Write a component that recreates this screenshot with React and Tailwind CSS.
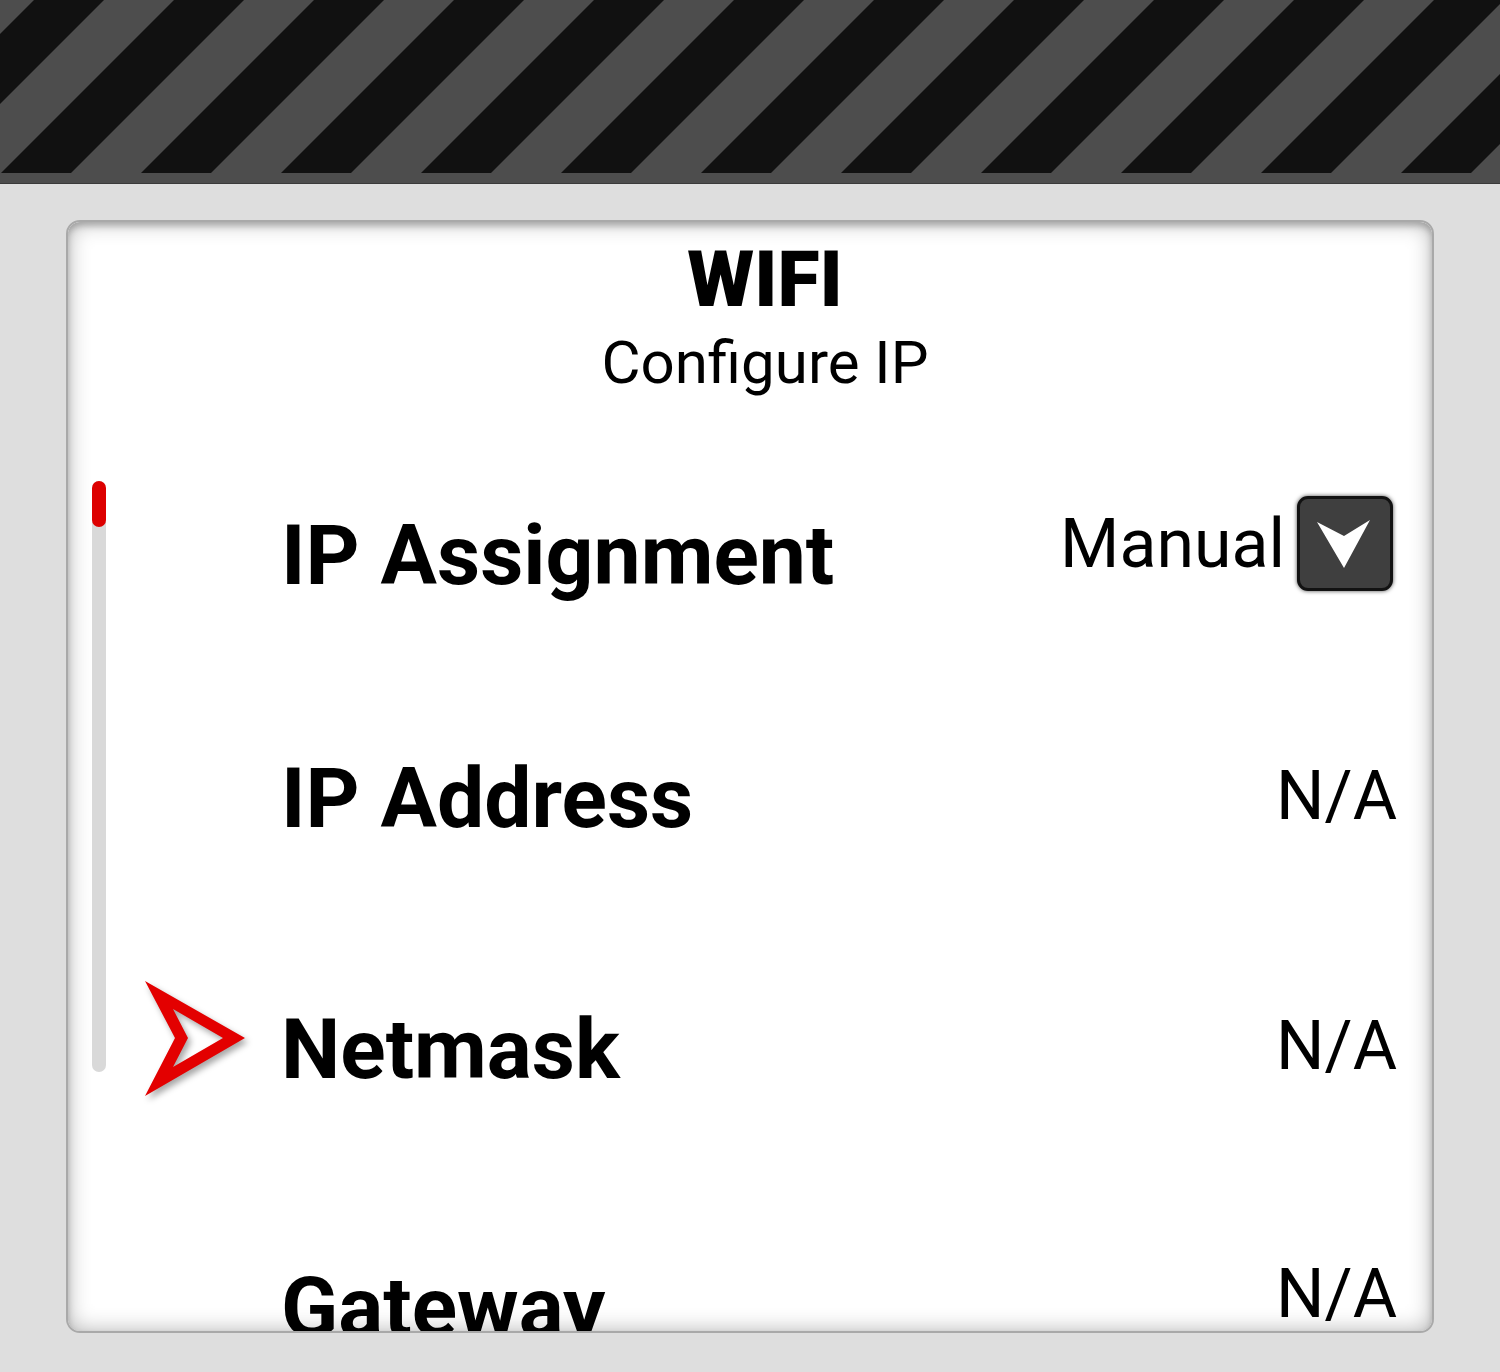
import React from "react";

const rows = [
  { label: "IP Assignment", value: "Manual", dropdown: true, labelTop: "mt-[20px]", valueTop: "mt-[16px]" },
  { label: "IP Address", value: "N/A", labelTop: "mt-[13px]", valueTop: "mt-[18px]" },
  { label: "Netmask", value: "N/A", selected: true, labelTop: "mt-[14px]", valueTop: "mt-[18px]" },
  { label: "Gateway", value: "N/A", labelTop: "mt-[22px]", valueTop: "mt-[16px]" },
];

const Stripes = () => {
  const bands = [];
  for (let k = -2; k < 12; k++) {
    const x = 140 * k;
    bands.push(
      <polygon key={k} points={`${x},174 ${x + 70},174 ${x + 244},0 ${x + 174},0`} fill="#111111" />
    );
  }
  return (
    <svg width="1500" height="173" viewBox="0 0 1500 173" className="block">
      {bands}
    </svg>
  );
};

const DropdownButton = () => (
  <div className="mt-[2px] mr-[4px] w-[96px] h-[95px] rounded-[11px] border-[3px] border-[#121212] bg-[#3f3f3f] shadow-[0_0_4px_rgba(0,0,0,0.7)] flex items-center justify-center">
    <svg width="90" height="89" viewBox="0 0 90 89">
      <polygon points="17,23 44,37 70,21 44,69" fill="#ffffff" />
    </svg>
  </div>
);

const Pointer = () => (
  <svg width="120" height="130" viewBox="140 975 120 130" className="-mt-[20px] ml-[34px] drop-shadow-[3px_4px_3px_rgba(0,0,0,0.35)]">
    <path
      fillRule="evenodd"
      fill="#e30000"
      d="M145 982 L245 1039 L145 1097 L175 1039 Z M173 1010 L188 1039 L173 1068 L223 1039 Z"
    />
  </svg>
);

const Row = ({ row }) => (
  <div className="h-[250px] flex items-start">
    <div className="w-[175px] shrink-0 flex">
      {row.selected && <Pointer />}
    </div>
    <div className={`${row.labelTop} flex-1 text-[84px] leading-none font-bold text-black`}>{row.label}</div>
    <div className="flex items-start gap-[12px]">
      <div className={`${row.valueTop} text-[68px] leading-none text-black`}>{row.value}</div>
      {row.dropdown && <DropdownButton />}
    </div>
  </div>
);

export default function App() {
  return (
    <div className="w-[1500px] h-[1372px] bg-[#dedede] font-['Roboto',sans-serif] overflow-hidden">
      <header className="h-[184px] bg-[#4d4d4d] border-b border-[#3a3a3a]">
        <Stripes />
      </header>

      <main className="mt-[36px] mx-[66px]">
        <section className="relative h-[1113px] rounded-[14px] border-2 border-[#a9a9a9] bg-white overflow-hidden">
          <div className="pt-[20px] pl-[30px] flex flex-col items-center">
            <h1 className="text-[77px] leading-none font-black text-black">WIFI</h1>
            <p className="mt-[14px] text-[60px] leading-none text-black">Configure IP</p>
          </div>

          <div className="mt-[88px] flex items-start">
            <div className="ml-[24px] w-[14px] h-[591px] rounded-full bg-[#d9d9d9] shrink-0">
              <div className="h-[46px] rounded-full bg-[#dd0000]" />
            </div>
            <div className="mt-[13px] flex-1 pr-[35px]">
              {rows.map((row) => (
                <Row key={row.label} row={row} />
              ))}
            </div>
          </div>

          <div className="pointer-events-none absolute inset-0 rounded-[12px] shadow-[inset_0_0_22px_rgba(0,0,0,0.3),inset_0_4px_6px_rgba(0,0,0,0.22)]" />
        </section>
      </main>
    </div>
  );
}
